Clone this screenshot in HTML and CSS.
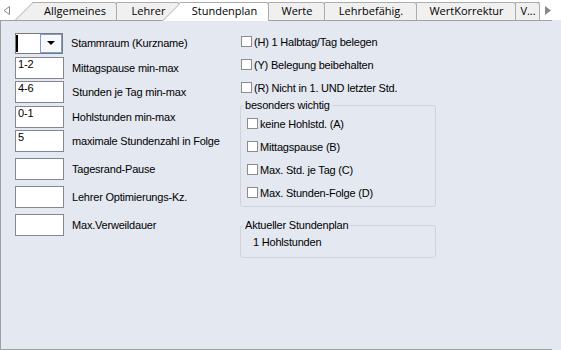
FILE: index.html
```html
<!DOCTYPE html>
<html lang="de">
<head>
  <meta charset="UTF-8">
  <title>Lehrer - Stundenplan</title>
  <link rel="stylesheet" href="styles.css">
</head>
<body>
<!-- Reiterleiste -->
<div class="tabstrip">
  <span class="scroll scroll-left">
    <svg width="7" height="9" viewBox="0 0 7 9"><path d="M6.5 0.5 L1 4.5 L6.5 8.5 Z" fill="none" stroke="#8a8a8a"/></svg>
  </span>
  <div class="tabs">
    <div class="tab tab-allg">Allgemeines</div>
    <div class="tab tab-lehrer">Lehrer</div>
    <div class="tab tab-stunden active">Stundenplan</div>
    <div class="tab tab-werte">Werte</div>
    <div class="tab tab-lehrbef">Lehrbefähig.</div>
    <div class="tab tab-wertk">WertKorrektur</div>
    <div class="tab tab-v">V...</div>
  </div>
  <span class="scroll scroll-right">
    <svg width="6" height="9" viewBox="0 0 6 9"><path d="M0 0 L6 4.5 L0 9 Z" fill="#8a8a8a"/></svg>
  </span>
</div>

<!-- Inhalt Reiter Stundenplan -->
<div class="panel">
  <div class="col-left">
    <div class="row">
      <div class="combo">
        <div class="combo-text"><span class="caret"></span></div>
        <div class="combo-btn"><span class="arrow"></span></div>
      </div>
      <span class="label">Stammraum (Kurzname)</span>
    </div>
    <div class="row">
      <input class="textbox" type="text" value="1-2">
      <span class="label">Mittagspause min-max</span>
    </div>
    <div class="row">
      <input class="textbox" type="text" value="4-6">
      <span class="label">Stunden je Tag min-max</span>
    </div>
    <div class="row">
      <input class="textbox" type="text" value="0-1">
      <span class="label">Hohlstunden min-max</span>
    </div>
    <div class="row">
      <input class="textbox" type="text" value="5">
      <span class="label">maximale Stundenzahl in Folge</span>
    </div>
    <div class="row spaced">
      <input class="textbox" type="text" value="">
      <span class="label">Tagesrand-Pause</span>
    </div>
    <div class="row spaced">
      <input class="textbox" type="text" value="">
      <span class="label">Lehrer Optimierungs-Kz.</span>
    </div>
    <div class="row spaced">
      <input class="textbox" type="text" value="">
      <span class="label">Max.Verweildauer</span>
    </div>
  </div>

  <div class="col-right">
    <label class="check"><input type="checkbox"><span>(H) 1 Halbtag/Tag belegen</span></label>
    <label class="check"><input type="checkbox"><span>(Y) Belegung beibehalten</span></label>
    <label class="check"><input type="checkbox"><span>(R) Nicht in 1. UND letzter Std.</span></label>

    <fieldset class="group">
      <legend>besonders wichtig</legend>
      <label class="check"><input type="checkbox"><span>keine Hohlstd. (A)</span></label>
      <label class="check"><input type="checkbox"><span>Mittagspause (B)</span></label>
      <label class="check"><input type="checkbox"><span>Max. Std. je Tag (C)</span></label>
      <label class="check"><input type="checkbox"><span>Max. Stunden-Folge (D)</span></label>
    </fieldset>

    <fieldset class="group group-info">
      <legend>Aktueller Stundenplan</legend>
      <div class="info">1 Hohlstunden</div>
    </fieldset>
  </div>
</div>
</body>
</html>
```

FILE: styles.css
```css
body {
  margin: 0;
  background-color: #e4e8f0;
  font-family: "Liberation Sans", Arial, sans-serif;
  font-size: 11px;
  letter-spacing: -0.2px;
  color: #000;
  overflow: hidden;
}

/* Reiterleiste */
.tabstrip {
  display: flex;
  align-items: flex-end;
  height: 20px;
  background-color: #fff;
}
.scroll {
  display: flex;
  align-self: stretch;
  align-items: center;
}
.scroll-left {
  width: 12px;
  padding-left: 3px;
}
.scroll-right {
  margin-left: 5px;
}
.tabs {
  display: flex;
  align-items: flex-end;
}
.tab {
  position: relative;
  flex: none;
  box-sizing: border-box;
  height: 18px;
  margin-left: -18px;
  padding: 1px 0 0 18px;
  font-family: "Open Sans", sans-serif;
  font-size: 11px;
  letter-spacing: 0;
  line-height: 16px;
  text-align: center;
  color: #000;
}
.tab:first-child {
  margin-left: 0;
}
.tab::before {
  content: "";
  position: absolute;
  left: 0;
  bottom: 0;
  width: 24px;
  height: 100%;
  box-sizing: border-box;
  transform-origin: left bottom;
  transform: skewX(-45deg);
  background-color: #f0f0f0;
  border-left: 1px solid #acacac;
  border-top: 1px solid #acacac;
  z-index: -1;
}
.tab::after {
  content: "";
  position: absolute;
  left: 18px;
  right: 0;
  top: 0;
  bottom: 0;
  background-color: #f0f0f0;
  border-top: 1px solid #acacac;
  border-right: 1px solid #acacac;
  border-top-right-radius: 3px;
  z-index: -1;
}
.tab.active {
  height: 19px;
  margin-bottom: -1px;
  padding-bottom: 1px;
}
.tab.active::before,
.tab.active::after {
  background-color: #fff;
}
.tab-allg { width: 102px; z-index: 7; }
.tab-lehrer { width: 81px; z-index: 6; }
.tab-stunden { width: 107px; z-index: 10; }
.tab-werte { width: 74px; z-index: 4; }
.tab-lehrbef { width: 110px; z-index: 3; }
.tab-wertk { width: 117px; z-index: 2; }
.tab-v { width: 42px; z-index: 1; }

/* Seite */
.panel {
  display: flex;
  box-sizing: border-box;
  width: 552px;
  height: 330px;
  border: 1px solid #a0a0a0;
  border-right: none;
}
.col-left {
  box-sizing: border-box;
  width: 239px;
  padding: 11px 0 0 14px;
}
.row {
  display: flex;
  align-items: center;
  height: 22px;
}
.row + .row {
  margin-top: 2.5px;
}
.row.spaced {
  margin-top: 6px;
}
.label {
  margin-left: 8px;
}
.textbox {
  box-sizing: border-box;
  width: 49px;
  height: 22px;
  margin: 0;
  padding: 0 2px 8px;
  border: 1px solid #828790;
  background-color: #fff;
  font-family: inherit;
  font-size: 11px;
  letter-spacing: -0.2px;
  color: #000;
  outline: none;
}
.combo {
  display: flex;
  box-sizing: border-box;
  width: 48px;
  height: 21px;
  border: 1px solid #7a7a7a;
  background-color: #fff;
}
.combo-text {
  flex: 1;
  display: flex;
  align-items: center;
}
.caret {
  width: 2px;
  height: 17px;
  background-color: #000;
}
.combo-btn {
  box-sizing: border-box;
  width: 22px;
  border: 1px solid #7a9fd4;
  background-color: #f7f9fc;
  display: flex;
  align-items: center;
  justify-content: center;
}
.arrow {
  width: 0;
  height: 0;
  border-left: 4px solid transparent;
  border-right: 4px solid transparent;
  border-top: 4px solid #000;
}

/* rechte Spalte */
.col-right {
  width: 196px;
  padding-top: 9px;
}
.check {
  display: flex;
  align-items: center;
  height: 23px;
  padding-left: 1px;
}
.check input {
  appearance: none;
  -webkit-appearance: none;
  box-sizing: border-box;
  width: 11px;
  height: 11px;
  margin: 0 2px 0 0;
  border: 1px solid #8c8c8c;
  background-color: #fff;
}
.group {
  box-sizing: border-box;
  width: 196px;
  margin: 0;
  padding: 0 6px 2px;
  border: 1px solid #d0d4da;
  border-radius: 3px;
}
.group legend {
  margin-left: -4px;
  padding: 0 2px;
  line-height: 13px;
}
.group .check {
  padding-left: 0;
}
.group-info {
  margin-top: 12px;
  padding: 3px 12px 8px;
}
.group-info legend {
  margin-left: -10px;
}
.info {
  line-height: 14px;
}
```
